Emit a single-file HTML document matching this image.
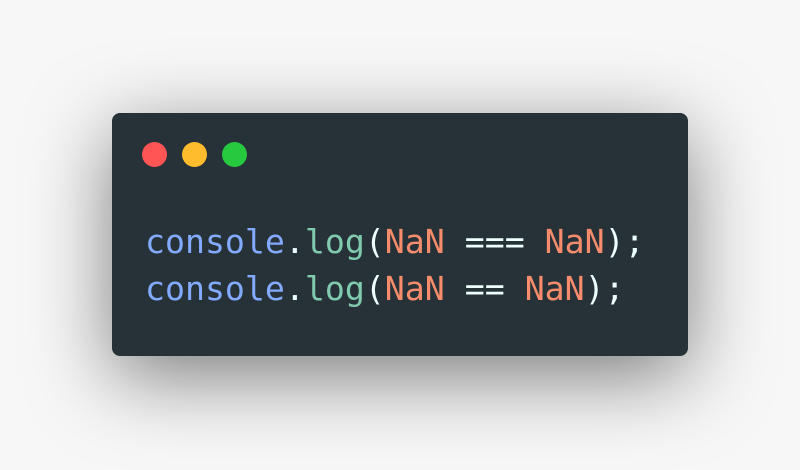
<!DOCTYPE html>
<html><head><style>
html,body{margin:0;padding:0;width:800px;height:470px;background:#f7f7f7;overflow:hidden}
.card{position:absolute;left:112px;top:113px;width:576px;height:243px;background:#263238;border-radius:8px;box-shadow:0 20px 80px rgba(0,0,0,0.5)}
.dot{position:absolute;top:142px;width:25px;height:25px;border-radius:50%}
pre{position:absolute;left:145px;top:218px;margin:0;font-family:"DejaVu Sans Mono","Liberation Mono",monospace;font-size:33.2px;line-height:47px;color:#eeffff}
.c{color:#82aaff}.l{color:#80cbae}.n{color:#f78c6c}.p{color:#eeffff}
</style></head><body>
<div class="card"></div>
<div class="dot" style="left:142px;background:#ff5555"></div>
<div class="dot" style="left:182px;background:#ffbd2e"></div>
<div class="dot" style="left:222px;background:#27c93f"></div>
<pre><span class="c">console</span>.<span class="l">log</span>(<span class="n">NaN</span> === <span class="n">NaN</span>);
<span class="c">console</span>.<span class="l">log</span>(<span class="n">NaN</span> == <span class="n">NaN</span>);</pre>
</body></html>
